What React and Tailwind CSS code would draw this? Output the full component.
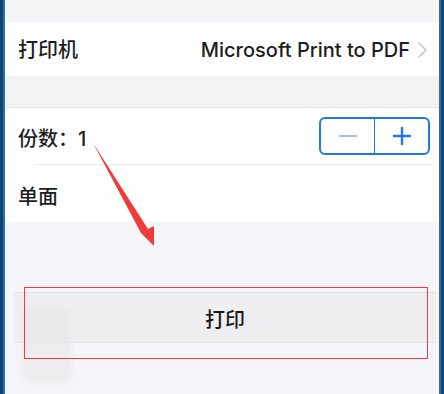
import React from "react";

export default function App() {
  const font = { fontFamily: 'Inter, "Noto Sans CJK SC", sans-serif' };
  return (
    <div className="relative w-[444px] h-[394px] overflow-hidden flex bg-[#f6f5f9]" style={font}>
      <div className="w-[5px] h-full flex">
        <div className="w-[3px] bg-[#0d4675]" />
        <div className="w-[2px] bg-[#2f6ea3]" />
      </div>
      <div className="flex-1 flex flex-col bg-[#f6f5f9] text-[#1e1e1e] font-medium">
        <div className="h-[22px] bg-[#f5f5f7]" />
        <div className="h-[54px] bg-white flex items-center justify-between pl-[13px] pr-[12px] pt-[1px]">
          <span className="text-[20px]">打印机</span>
          <div className="flex items-center gap-[8px]">
            <span className="text-[20px]">Microsoft Print to PDF</span>
            <svg width="9" height="16" viewBox="0 0 9 16" fill="none">
              <path d="M1 1l7 7-7 7" stroke="#c7c7cc" strokeWidth="1.6" strokeLinecap="round" strokeLinejoin="round" />
            </svg>
          </div>
        </div>
        <div className="h-[32px] bg-[#f2f2f4] border-b border-[#e6e6ea]" />
        <div className="bg-white">
          <div className="h-[56px] flex items-center justify-between pl-[13px] pr-[9px]">
            <span className="text-[20px] pt-[6px]">份数：1</span>
            <div className="w-[111px] h-[38px] border-2 border-[#1f7ae8] rounded-[6px] flex">
              <div className="flex-1 flex items-center justify-center border-r border-[#1f7ae8]">
                <div className="w-[18px] h-[2px] bg-[#9cc4f2]" />
              </div>
              <div className="flex-1 flex items-center justify-center">
                <svg width="20" height="20" viewBox="0 0 20 20">
                  <path d="M10 2v16M2 10h16" stroke="#1f7ae8" strokeWidth="2.4" strokeLinecap="round" />
                </svg>
              </div>
            </div>
          </div>
          <div className="ml-[30px] mr-[7px] h-px bg-[#eaeaee]" />
          <div className="h-[57px] flex items-center pl-[13px] pt-[6px]">
            <span className="text-[20px]">单面</span>
          </div>
        </div>
        <div className="h-[70px]" />
        <div className="ml-[9px] mr-[3px] h-[51px] bg-[#efeff1] border-y border-[#e2e2e5] flex items-center justify-center pt-[4px]">
          <span className="text-[20px] text-[#1a1a1a]">打印</span>
        </div>
      </div>
      <div className="w-[5px] h-full flex">
        <div className="w-[2px] bg-[#2f6ea3]" />
        <div className="w-[3px] bg-[#0d4675]" />
      </div>

      <div className="absolute left-[22px] top-[308px] w-[50px] h-[76px] rounded-[10px] bg-[#e8e8ea] opacity-60 blur-[2px]" />
      <div className="absolute left-[24px] top-[287px] w-[404px] h-[72px] border border-[#f03c3c]" />
      <svg className="absolute left-0 top-0" width="444" height="394" viewBox="0 0 444 394">
        <path d="M93 143 L141 233 L154 246 L154 226 L148 229 Z" fill="#f23a3a" />
      </svg>
    </div>
  );
}
